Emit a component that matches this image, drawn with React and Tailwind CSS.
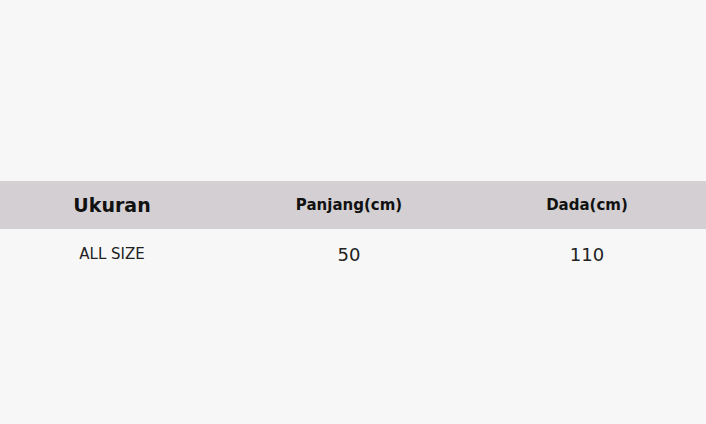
export default function App() {
  const font = { fontFamily: '"DejaVu Sans", sans-serif' };
  return (
    <div className="w-[706px] h-[424px] bg-[#f7f7f7] pt-[181px]" style={font}>
      <div className="grid grid-cols-[224px_250px_226px] h-[48px] bg-[#d3cfd2] items-center text-[#111]">
        <div className="text-center font-bold text-[19px]">Ukuran</div>
        <div className="text-center font-bold text-[15px]">Panjang(cm)</div>
        <div className="text-center font-bold text-[15px]">Dada(cm)</div>
      </div>
      <div className="grid grid-cols-[224px_250px_226px] h-[50px] items-center text-[#222]">
        <div className="text-center text-[15px]">ALL SIZE</div>
        <div className="text-center text-[18px]">50</div>
        <div className="text-center text-[18px]">110</div>
      </div>
    </div>
  );
}
